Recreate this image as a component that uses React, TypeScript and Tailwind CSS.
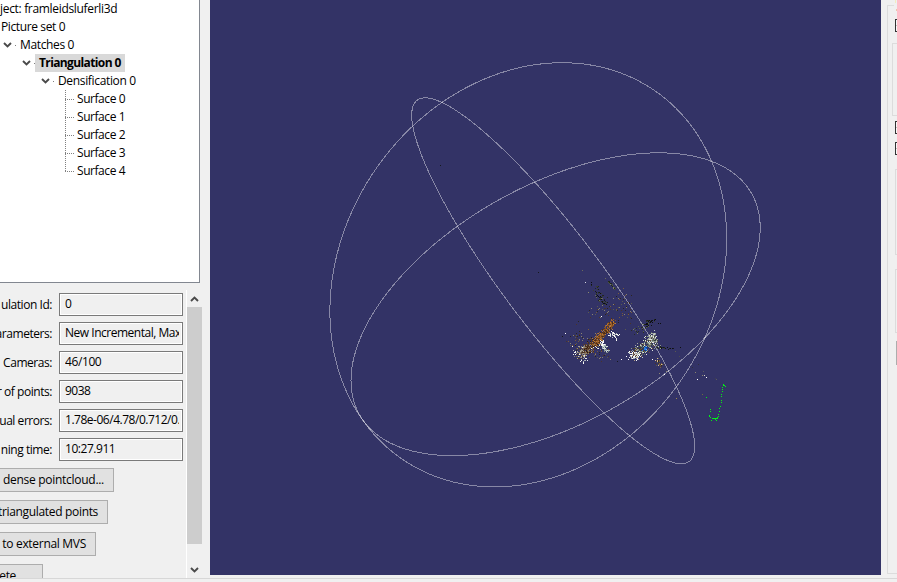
import React from 'react';

type Ring = { cx: number; cy: number; w: number; h: number; lean: number };

// Trackball rings of the 3D view, in window coordinates.
const rings: Ring[] = [
  { cx: 528.3, cy: 274.8, w: 198.4, h: 212.1, lean: 0.171 },
  { cx: 555.6, cy: 304.2, w: 204.6, h: 151.4, lean: 0.505 },
  { cx: 553.2, cy: 280.8, w: 141.5, h: 183, lean: -0.905 },
];

function ringPath({ cx, cy, w, h, lean }: Ring) {
  const d = Math.acos(lean);
  const pts: string[] = [];
  for (let i = 0; i < 180; i++) {
    const t = (i / 180) * Math.PI * 2;
    pts.push(`${(cx + w * Math.cos(t)).toFixed(2)},${(cy - h * Math.cos(t - d)).toFixed(2)}`);
  }
  return `M${pts.join('L')}Z`;
}

type Cluster = {
  from: [number, number];
  to: [number, number];
  spread: number;
  count: number;
  colors: string[];
};

const browns = ['#8a5220', '#a5652a', '#6b3f1c', '#b87a3c', '#4c2c18', '#94602f'];
const darkBrowns = ['#4a3020', '#6b4a30', '#2c1c14', '#806040', '#8a8070', '#5c3a22'];
const darks = ['#15181c', '#22281f', '#0c0e12', '#3a4030'];
const mixed = ['#5a5a50', '#7a5a3a', '#2a2420', '#8a8270', '#4a3428'];
const whites = ['#ffffff', '#e4e8ec', '#c8ccd2', '#f4f4ee', '#a8b0b4'];
const stones = ['#8a9690', '#c2ccc4', '#5c6660', '#e2e6e0', '#39413c', '#a2a89c', '#6c6458'];
const rubble = ['#8a8070', '#6b6458', '#a8a090', '#4a3a2c', '#b8b4a8', '#5c4a3a'];

// Listed back to front: later clusters are painted over earlier ones.
const clusters: Cluster[] = [
  { from: [592, 282], to: [604, 304], spread: 2.6, count: 40, colors: darks },
  { from: [598, 294], to: [604, 303], spread: 2.6, count: 28, colors: [...darks, '#6b6b5a'] },
  { from: [608, 281], to: [615, 289], spread: 0.6, count: 24, colors: ['#48503c', '#20261c', '#808468'] },
  { from: [590, 311], to: [614, 311], spread: 5, count: 32, colors: mixed },
  { from: [618, 292], to: [630, 320], spread: 6, count: 46, colors: mixed },
  { from: [573, 335], to: [584, 345], spread: 7, count: 50, colors: mixed },
  { from: [592, 352], to: [609, 357], spread: 5, count: 30, colors: mixed },
  { from: [608, 331], to: [617, 337], spread: 2.2, count: 42, colors: whites },
  { from: [601, 340], to: [603, 347], spread: 1.8, count: 46, colors: whites },
  { from: [603, 346], to: [607, 350], spread: 1.9, count: 50, colors: ['#a8b8b8', '#7c8c88', '#d8e0e0'] },
  { from: [592, 347], to: [600, 344], spread: 2, count: 40, colors: whites },
  { from: [577, 351], to: [584, 361], spread: 3.6, count: 34, colors: whites },
  { from: [579, 352], to: [586, 351], spread: 3.8, count: 140, colors: rubble },
  { from: [584, 351], to: [599, 337], spread: 3.2, count: 260, colors: darkBrowns },
  { from: [594, 343], to: [613, 321], spread: 2.3, count: 400, colors: browns },
  { from: [633, 330], to: [647, 325], spread: 3, count: 32, colors: ['#5a604c', '#7c8068', '#282c24'] },
  { from: [643, 325], to: [652, 321], spread: 2.2, count: 36, colors: darks },
  { from: [635, 353], to: [650, 343], spread: 3.8, count: 250, colors: [...stones, '#6c4a34', '#503828'] },
  { from: [631, 355], to: [637, 355], spread: 2.8, count: 110, colors: [...whites, '#604030', '#b09a84'] },
  { from: [648, 341], to: [654, 336], spread: 3.4, count: 170, colors: stones },
  { from: [653, 336], to: [658, 346], spread: 1.7, count: 80, colors: stones },
  { from: [656, 347], to: [673, 348], spread: 0.7, count: 24, colors: darks },
  { from: [643, 349], to: [646, 347], spread: 1.5, count: 30, colors: ['#1458b8', '#2b7be0', '#0b3e96', '#7ab4f0'] },
  { from: [656, 359], to: [661, 366], spread: 2.2, count: 44, colors: [...mixed, '#ffffff', '#d8b890'] },
];

// Linear congruential generator: keeps the cloud identical on every render.
function makeRandom(seed: number) {
  let s = seed;
  return () => {
    s = (s * 1664525 + 1013904223) % 4294967296;
    return s / 4294967296;
  };
}

function buildCloud() {
  const rand = makeRandom(20);
  const pixels = new Map<string, string>();
  for (const c of clusters) {
    for (let i = 0; i < c.count; i++) {
      const t = rand();
      const nx = rand() + rand() + rand() - 1.5;
      const ny = rand() + rand() + rand() - 1.5;
      const x = Math.round(c.from[0] + (c.to[0] - c.from[0]) * t + nx * c.spread * 1.5);
      const y = Math.round(c.from[1] + (c.to[1] - c.from[1]) * t + ny * c.spread * 1.5);
      pixels.set(`${x} ${y}`, c.colors[Math.floor(rand() * c.colors.length)]);
    }
  }
  const layers = new Map<string, string>();
  pixels.forEach((color, at) => {
    layers.set(color, (layers.get(color) ?? '') + `M${at}h1v1h-1z`);
  });
  return [...layers];
}

const cloud = buildCloud();

const strays: [number, number, string][] = [
  [440, 165, '#15181c'], [538, 272, '#15181c'], [582, 270, '#6b6b5a'], [585, 282, '#d8d8e0'],
  [588, 292, '#8a8a70'], [605, 278, '#6b6b5a'], [565, 333, '#ffffff'], [562, 336, '#15181c'],
  [568, 341, '#7a5a3a'], [576, 324, '#4a3428'], [578, 321, '#2a2420'], [601, 316, '#ffffff'],
  [621, 359, '#ffffff'], [617, 361, '#15181c'], [655, 319, '#0c0e12'], [658, 323, '#0c0e12'],
  [660, 323, '#0c0e12'], [680, 347, '#0c0e12'], [675, 351, '#5a5a50'], [679, 356, '#4a4a50'],
  [664, 374, '#ffffff'], [659, 373, '#8a8270'], [666, 371, '#8a8270'], [676, 398, '#a08a50'],
  [692, 367, '#30303c'], [698, 364, '#30303c'], [695, 372, '#8a8270'], [697, 379, '#ffffff'],
  [703, 371, '#5a5a60'], [702, 375, '#8a8270'], [704, 375, '#d0d0c8'], [706, 377, '#ffffff'],
  [715, 378, '#40404c'], [716, 379, '#5a5a60'], [702, 394, '#6b6b40'],
];

const cameras: [number, number][] = [
  [723, 384], [724, 385], [725, 386], [723, 385], [722, 387], [722, 389], [722, 391], [721, 394],
  [721, 396], [721, 400], [721, 402], [720, 406], [719, 408], [719, 411], [718, 414], [718, 416],
  [717, 417], [717, 418], [716, 420], [715, 419], [714, 418], [713, 418], [712, 418], [711, 420],
  [716, 418], [715, 418], [710, 417], [709, 415], [709, 416], [710, 409], [710, 411], [706, 397],
];

function Viewport() {
  return (
    <div className="h-[575px] w-[671px] shrink-0 bg-[#333366]">
      <svg className="block h-full w-full" viewBox="210 0 671 575" shapeRendering="crispEdges">
        {cloud.map(([color, d]) => (
          <path key={color} d={d} fill={color} />
        ))}
        {strays.map(([x, y, color]) => (
          <rect key={`${x}-${y}`} x={x} y={y} width="1" height="1" fill={color} />
        ))}
        {cameras.map(([x, y]) => (
          <rect key={`${x}-${y}`} x={x} y={y} width="1" height="1" fill="#00f214" />
        ))}
        {rings.map((r) => (
          <path key={r.cx} d={ringPath(r)} fill="none" stroke="#ffffff" strokeOpacity="0.42" />
        ))}
      </svg>
    </div>
  );
}

function Chevron({ up = false }: { up?: boolean }) {
  return (
    <svg className="block h-[6px] w-[9px] shrink-0" viewBox="0 0 9 6">
      <path d={up ? 'M1 5 4.5 1.5 8 5' : 'M1 1 4.5 4.5 8 1'} fill="none" stroke="#4a4a4a" strokeWidth="1.9" />
    </svg>
  );
}

function Parent({ pad, label, text }: { pad: string; label: string; text: string }) {
  return (
    <div className={`flex h-[18px] items-center ${pad}`}>
      <Chevron />
      <span className="ml-[3px] h-px w-px bg-[#808080]" />
      <span className={text}>{label}</span>
    </div>
  );
}

function Tree() {
  return (
    <div className="h-[283px] w-[200px] overflow-hidden border-r border-b border-[#828790] bg-white">
      <div className="h-[18px] tracking-[-0.32px]">ject: framleidsluferli3d</div>
      <div className="h-[18px] pl-px tracking-[-0.38px]">Picture set 0</div>
      <Parent pad="pl-[3px]" label="Matches 0" text="ml-[4px] tracking-[-0.36px]" />
      <Parent
        pad="pl-[22px]"
        label="Triangulation 0"
        text="h-[18px] w-[90px] bg-[#d9d9d9] pl-[4px] font-bold tracking-[-0.62px]"
      />
      <Parent pad="pl-[41px]" label="Densification 0" text="ml-[4px] tracking-[-0.34px]" />
      <div className="ml-[65px]">
        {[0, 1, 2, 3, 4].map((n) => (
          <div key={n} className="flex h-[18px]">
            <span className="h-[10px] w-[9px] shrink-0 border-b border-dotted border-[#808080]" />
            <span
              className={
                n < 4
                  ? '-ml-[9px] h-[18px] w-px bg-[repeating-linear-gradient(#808080_0_1px,transparent_1px_2px)]'
                  : '-ml-[9px] h-[10px] w-px bg-[repeating-linear-gradient(#808080_0_1px,transparent_1px_2px)]'
              }
            />
            <span className="ml-[11px] tracking-[-0.44px]">Surface {n}</span>
          </div>
        ))}
      </div>
    </div>
  );
}

const fields = [
  { label: 'ulation Id:', value: '0', fit: 'tracking-[-0.4px]' },
  { label: 'arameters:', value: 'New Incremental, Max', fit: 'tracking-[-0.48px]' },
  { label: 'Cameras:', value: '46/100', fit: 'tracking-[-0.4px]' },
  { label: 'r of points:', value: '9038', fit: 'tracking-[-0.5px]' },
  { label: 'dual errors:', value: '1.78e-06/4.78/0.712/0.', fit: 'tracking-[-0.48px]' },
  { label: 'ning time:', value: '10:27.911', fit: 'tracking-[-0.46px]' },
];

const buttons = [
  { label: 'dense pointcloud...', size: 'w-[114px] pr-[9px] tracking-[-0.28px]' },
  { label: 'triangulated points', size: 'w-[108px] pr-[9px] tracking-[-0.33px]' },
  { label: 'to external MVS', size: 'w-[96px] pr-[9px] tracking-[-0.3px]' },
  { label: 'ete', size: 'w-[43px] pr-[26px] tracking-[-0.33px]' },
];

function Details() {
  return (
    <div className="flex h-[295px] pt-[7px]">
      <div className="h-[288px] w-[186px] shrink-0 overflow-hidden pt-[3px]">
        <div className="flex flex-col gap-[6px]">
          {fields.map((f) => (
            <div key={f.label} className="flex h-[23px] items-center">
              <div className="flex w-[52px] shrink-0 justify-end whitespace-nowrap tracking-[-0.45px]">{f.label}</div>
              <div className="ml-[7px] h-[23px] w-[124px] border border-[#7a7a7a] p-px">
                <div className="h-[19px] overflow-hidden bg-[#f0f0f0] outline outline-white">
                  <div className={`mr-[2px] ml-[4px] overflow-hidden leading-[18px] ${f.fit}`}>{f.value}</div>
                </div>
              </div>
            </div>
          ))}
        </div>
        <div className="mt-[7px] flex flex-col gap-[8px]">
          {buttons.map((b) => (
            <div
              key={b.label}
              className={`flex h-[24px] shrink-0 items-center justify-end overflow-hidden border border-l-0 border-[#adadad] bg-[#e1e1e1] ${b.size}`}
            >
              {b.label}
            </div>
          ))}
        </div>
      </div>
      <div className="flex h-[288px] w-[16px] flex-col items-center border-l border-white">
        <div className="flex h-[17px] items-center">
          <Chevron up />
        </div>
        <div className="h-[237px] w-[15px] bg-[#cdcdcd]" />
        <div className="flex flex-1 items-center pt-[17px]">
          <Chevron />
        </div>
      </div>
    </div>
  );
}

function Check({ gap }: { gap: string }) {
  return (
    <div className={`ml-[7px] h-[13px] w-[13px] shrink-0 border border-[#333333] bg-[#f8f8f8] pt-[5px] ${gap}`}>
      <div className="h-px bg-[#c9c0bc]" />
    </div>
  );
}

function Settings() {
  return (
    <div className="w-[16px] shrink-0 overflow-hidden pl-[6px]">
      <div className="ml-[8px] h-[5px] w-px border-t-[3px] border-[#f2ecc0]" />
      <div className="h-[569px] w-[40px] border border-t-0 border-[#dcdcdc]">
        <div className="flex flex-col">
          <div className="h-px w-[6px] bg-[#dcdcdc]" />
          <div className="mt-[3px] ml-[8px] h-[2px] w-px bg-[#efc4ae]" />
          <Check gap="mt-[8px]" />
          <div className="mt-[11px] ml-[4px] h-[73px] border border-[#dcdcdc]" />
          <Check gap="mt-[5px]" />
          <Check gap="mt-[8px]" />
          <div className="mt-[14px] ml-[7px] h-[86px] border border-[#dcdcdc]" />
          <div className="mt-[14px] ml-[7px] h-[64px] border border-[#dcdcdc]" />
          <div className="mt-[8px] ml-[8px] h-[24px] border border-[#adadad] bg-[#e1e1e1]" />
        </div>
      </div>
    </div>
  );
}

export default function App() {
  return (
    <div className="flex h-[582px] w-[897px] flex-col overflow-hidden bg-[#f0f0f0] font-['Open_Sans','Noto_Sans',sans-serif] text-[12px] leading-[18px] whitespace-nowrap text-black">
      <div className="flex h-[578px] shrink-0">
        <div className="w-[210px] shrink-0 overflow-hidden">
          <Tree />
          <Details />
        </div>
        <Viewport />
        <Settings />
      </div>
      <div className="h-px shrink-0 bg-[#d7d7d7]" />
    </div>
  );
}
